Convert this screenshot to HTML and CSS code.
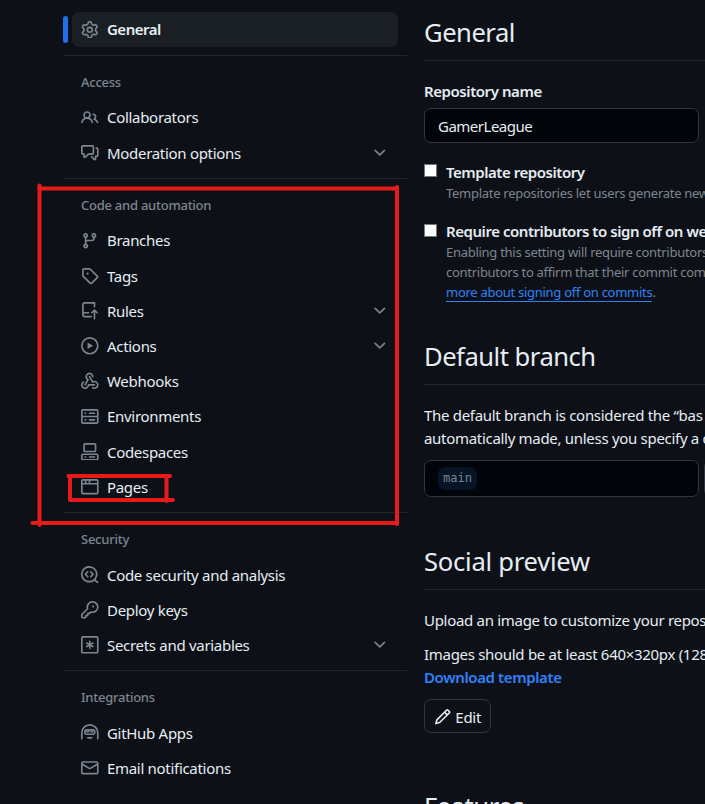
FILE: index.html
```html
<!DOCTYPE html>
<html lang="en">
<head>
<meta charset="utf-8">
<title>General settings</title>
<link rel="stylesheet" href="styles.css">
</head>
<body>
<svg class="defs" width="0" height="0">
  <symbol id="chev" viewBox="0 0 16 16"><path d="M12.78 5.22a.749.749 0 0 1 0 1.06l-4.25 4.25a.749.749 0 0 1-1.06 0L3.22 6.28a.749.749 0 1 1 1.06-1.06L8 8.939l3.72-3.719a.749.749 0 0 1 1.06 0Z"/></symbol>
</svg>
<div class="page">
  <nav class="sidebar">
    <a class="item active"><svg class="icon" viewBox="0 0 16 16"><path d="M8 0a8.2 8.2 0 0 1 .701.031C9.444.095 9.99.645 10.16 1.29l.288 1.107c.018.066.079.158.212.224.231.114.454.243.668.386.123.082.233.09.299.071l1.103-.303c.644-.176 1.392.021 1.82.63.27.385.506.792.704 1.218.315.675.111 1.422-.364 1.891l-.814.806c-.049.048-.098.147-.088.294.016.257.016.515 0 .772-.01.147.038.246.088.294l.814.806c.475.469.679 1.216.364 1.891a7.977 7.977 0 0 1-.704 1.217c-.428.61-1.176.807-1.82.63l-1.102-.302c-.067-.019-.177-.011-.3.071a5.909 5.909 0 0 1-.668.386c-.133.066-.194.158-.211.224l-.29 1.106c-.168.646-.715 1.196-1.458 1.26a8.006 8.006 0 0 1-1.402 0c-.743-.064-1.289-.614-1.458-1.26l-.289-1.106c-.018-.066-.079-.158-.212-.224a5.738 5.738 0 0 1-.668-.386c-.123-.082-.233-.09-.299-.071l-1.103.303c-.644.176-1.392-.021-1.82-.63a8.12 8.12 0 0 1-.704-1.218c-.315-.675-.111-1.422.363-1.891l.815-.806c.05-.048.098-.147.088-.294a6.214 6.214 0 0 1 0-.772c.01-.147-.038-.246-.088-.294l-.815-.806C.635 6.045.431 5.298.746 4.623a7.92 7.92 0 0 1 .704-1.217c.428-.61 1.176-.807 1.82-.63l1.102.302c.067.019.177.011.3-.071.214-.143.437-.272.668-.386.133-.066.194-.158.211-.224l.29-1.106C6.009.645 6.556.095 7.299.03 7.53.01 7.764 0 8 0Zm-.571 1.525c-.036.003-.108.036-.137.146l-.289 1.105c-.147.561-.549.967-.998 1.189-.173.086-.34.183-.5.29-.417.278-.97.423-1.529.27l-1.103-.303c-.109-.03-.175.016-.195.045-.22.312-.412.644-.573.99-.014.031-.021.11.059.19l.815.806c.411.406.562.957.53 1.456a4.709 4.709 0 0 0 0 .582c.032.499-.119 1.05-.53 1.456l-.815.806c-.081.08-.073.159-.059.19.162.346.353.677.573.989.02.03.085.076.195.046l1.102-.303c.56-.153 1.113-.008 1.53.27.161.107.328.204.501.29.447.222.85.629.997 1.189l.289 1.105c.029.109.101.143.137.146a6.6 6.6 0 0 0 1.142 0c.036-.003.108-.036.137-.146l.289-1.105c.147-.561.549-.967.998-1.189.173-.086.34-.183.5-.29.417-.278.97-.423 1.529-.27l1.103.303c.109.029.175-.016.195-.045.22-.313.411-.644.573-.99.014-.031.021-.11-.059-.19l-.815-.806c-.411-.406-.562-.957-.53-1.456a4.709 4.709 0 0 0 0-.582c-.032-.499.119-1.05.53-1.456l.815-.806c.081-.08.073-.159.059-.19a6.464 6.464 0 0 0-.573-.989c-.02-.03-.085-.076-.195-.046l-1.102.303c-.56.153-1.113.008-1.53-.27a4.44 4.44 0 0 0-.501-.29c-.447-.222-.85-.629-.997-1.189l-.289-1.105c-.029-.11-.101-.143-.137-.146a6.6 6.6 0 0 0-1.142 0ZM11 8a3 3 0 1 1-6 0 3 3 0 0 1 6 0ZM9.5 8a1.5 1.5 0 1 0-3.001.001A1.5 1.5 0 0 0 9.5 8Z"/></svg><span>General</span></a>

    <section class="group">
      <h3>Access</h3>
      <a class="item"><svg class="icon" viewBox="0 0 16 16"><path d="M2 5.5a3.5 3.5 0 1 1 5.898 2.549 5.508 5.508 0 0 1 3.034 4.084.75.75 0 1 1-1.482.235 4 4 0 0 0-7.9 0 .75.75 0 0 1-1.482-.236A5.507 5.507 0 0 1 3.102 8.05 3.493 3.493 0 0 1 2 5.5ZM11 4a3.001 3.001 0 0 1 2.22 5.018 5.01 5.01 0 0 1 2.56 3.012.749.749 0 0 1-.885.954.752.752 0 0 1-.549-.514 3.507 3.507 0 0 0-2.522-2.372.75.75 0 0 1-.574-.73v-.352a.75.75 0 0 1 .416-.672A1.5 1.5 0 0 0 11 5.5.75.75 0 0 1 11 4Zm-5.5-.5a2 2 0 1 0-.001 3.999A2 2 0 0 0 5.5 3.5Z"/></svg><span>Collaborators</span></a>
      <a class="item"><svg class="icon" viewBox="0 0 16 16"><path d="M1.75 1h8.5c.966 0 1.75.784 1.75 1.75v5.5A1.75 1.75 0 0 1 10.25 10H7.061l-2.574 2.573A1.458 1.458 0 0 1 2 11.543V10h-.25A1.75 1.75 0 0 1 0 8.25v-5.5C0 1.784.784 1 1.75 1ZM1.5 2.75v5.5c0 .138.112.25.25.25h1a.75.75 0 0 1 .75.75v2.19l2.72-2.72a.749.749 0 0 1 .53-.22h3.5a.25.25 0 0 0 .25-.25v-5.5a.25.25 0 0 0-.25-.25h-8.5a.25.25 0 0 0-.25.25Zm13 2a.25.25 0 0 0-.25-.25h-.5a.75.75 0 0 1 0-1.5h.5c.966 0 1.75.784 1.75 1.75v5.5A1.75 1.75 0 0 1 14.25 12H14v1.543a1.458 1.458 0 0 1-2.487 1.03L9.22 12.28a.749.749 0 0 1 1.06-1.06l2.22 2.22v-2.19a.75.75 0 0 1 .75-.75h1a.25.25 0 0 0 .25-.25Z"/></svg><span>Moderation options</span><svg class="chevron"><use href="#chev"/></svg></a>
    </section>

    <section class="group">
      <h3>Code and automation</h3>
      <a class="item"><svg class="icon" viewBox="0 0 16 16"><path d="M9.5 3.25a2.25 2.25 0 1 1 3 2.122V6A2.5 2.5 0 0 1 10 8.5H6a1 1 0 0 0-1 1v1.128a2.251 2.251 0 1 1-1.5 0V5.372a2.25 2.25 0 1 1 1.5 0v1.836A2.493 2.493 0 0 1 6 7h4a1 1 0 0 0 1-1v-.628A2.25 2.25 0 0 1 9.5 3.25Zm-6 0a.75.75 0 1 0 1.5 0 .75.75 0 0 0-1.5 0Zm8.25-.75a.75.75 0 1 0 0 1.5.75.75 0 0 0 0-1.5ZM4.25 12a.75.75 0 1 0 0 1.5.75.75 0 0 0 0-1.5Z"/></svg><span>Branches</span></a>
      <a class="item"><svg class="icon" viewBox="0 0 16 16"><path d="M1 7.775V2.75C1 1.784 1.784 1 2.75 1h5.025c.464 0 .91.184 1.238.513l6.25 6.25a1.75 1.75 0 0 1 0 2.474l-5.026 5.026a1.75 1.75 0 0 1-2.474 0l-6.25-6.25A1.752 1.752 0 0 1 1 7.775Zm1.5 0c0 .066.026.13.073.177l6.25 6.25a.25.25 0 0 0 .354 0l5.025-5.025a.25.25 0 0 0 0-.354l-6.25-6.25a.25.25 0 0 0-.177-.073H2.75a.25.25 0 0 0-.25.25ZM6 5a1 1 0 1 1 0 2 1 1 0 0 1 0-2Z"/></svg><span>Tags</span></a>
      <a class="item"><svg class="icon" viewBox="0 0 16 16"><path d="M1 2.5A2.5 2.5 0 0 1 3.5 0h8.75a.75.75 0 0 1 .75.75v3.5a.75.75 0 0 1-1.5 0V1.5h-8a1 1 0 0 0-1 1v6.708A2.493 2.493 0 0 1 3.5 9h3.25a.75.75 0 0 1 0 1.5H3.5a1 1 0 0 0 0 2h5.75a.75.75 0 0 1 0 1.5H3.5A2.5 2.5 0 0 1 1 11.5Zm13.23 7.79-1.24-1.208v6.169a.75.75 0 0 1-1.5 0V9.082l-1.213 1.228a.75.75 0 0 1-1.06-1.06l2.505-2.505a.75.75 0 0 1 1.06 0L15.29 9.23a.75.75 0 0 1-1.06 1.06Z"/></svg><span>Rules</span><svg class="chevron"><use href="#chev"/></svg></a>
      <a class="item"><svg class="icon" viewBox="0 0 16 16"><path d="M8 0a8 8 0 1 1 0 16A8 8 0 0 1 8 0ZM1.5 8a6.5 6.5 0 1 0 13 0 6.5 6.5 0 0 0-13 0Zm4.879-2.773 4.264 2.559a.25.25 0 0 1 0 .428l-4.264 2.559A.25.25 0 0 1 6 10.559V5.442a.25.25 0 0 1 .379-.215Z"/></svg><span>Actions</span><svg class="chevron"><use href="#chev"/></svg></a>
      <a class="item"><svg class="icon" viewBox="0 0 16 16"><path d="M5.5 4.25a2.25 2.25 0 0 1 4.5 0 .75.75 0 0 0 1.5 0 3.75 3.75 0 1 0-6.14 2.889l-2.272 4.258a.75.75 0 0 0 1.324.706L7 7.25a.75.75 0 0 0-.309-1.015A2.25 2.25 0 0 1 5.5 4.25Z"/><path d="M7.364 3.607a.75.75 0 0 1 1.03.257l2.608 4.349a3.75 3.75 0 1 1-.628 6.785.75.75 0 0 1 .752-1.299 2.25 2.25 0 1 0-.033-3.88.75.75 0 0 1-1.03-.256L7.107 4.636a.75.75 0 0 1 .257-1.03Z"/><path d="M2.9 8.776A.75.75 0 0 1 2.625 9.8 2.25 2.25 0 1 0 6 11.75a.75.75 0 0 1 .75-.751h5.5a.75.75 0 0 1 0 1.5H7.425a3.751 3.751 0 1 1-5.55-3.998.75.75 0 0 1 1.024.274Z"/></svg><span>Webhooks</span></a>
      <a class="item"><svg class="icon" viewBox="0 0 16 16"><path d="M1.75 1h12.5c.966 0 1.75.784 1.75 1.75v4c0 .372-.116.717-.314 1 .198.283.314.628.314 1v4a1.75 1.75 0 0 1-1.75 1.75H1.75A1.75 1.75 0 0 1 0 12.75v-4c0-.358.109-.707.314-1a1.739 1.739 0 0 1-.314-1v-4C0 1.784.784 1 1.75 1ZM1.5 2.75v4c0 .138.112.25.25.25h12.5a.25.25 0 0 0 .25-.25v-4a.25.25 0 0 0-.25-.25H1.75a.25.25 0 0 0-.25.25Zm.25 5.75a.25.25 0 0 0-.25.25v4c0 .138.112.25.25.25h12.5a.25.25 0 0 0 .25-.25v-4a.25.25 0 0 0-.25-.25ZM7 4.75A.75.75 0 0 1 7.75 4h4.5a.75.75 0 0 1 0 1.5h-4.5A.75.75 0 0 1 7 4.75ZM7.75 10h4.5a.75.75 0 0 1 0 1.5h-4.5a.75.75 0 0 1 0-1.5ZM3 4.75A.75.75 0 0 1 3.75 4h.5a.75.75 0 0 1 0 1.5h-.5A.75.75 0 0 1 3 4.75ZM3.75 10h.5a.75.75 0 0 1 0 1.5h-.5a.75.75 0 0 1 0-1.5Z"/></svg><span>Environments</span></a>
      <a class="item"><svg class="icon" viewBox="0 0 16 16"><path d="M0 11.25c0-.966.784-1.75 1.75-1.75h12.5c.966 0 1.75.784 1.75 1.75v3A1.75 1.75 0 0 1 14.25 16H1.75A1.75 1.75 0 0 1 0 14.25Zm2-9.5C2 .784 2.784 0 3.75 0h8.5C13.216 0 14 .784 14 1.75v5a1.75 1.75 0 0 1-1.75 1.75h-8.5A1.75 1.75 0 0 1 2 6.75Zm1.75-.25a.25.25 0 0 0-.25.25v5c0 .138.112.25.25.25h8.5a.25.25 0 0 0 .25-.25v-5a.25.25 0 0 0-.25-.25Zm-2 9.5a.25.25 0 0 0-.25.25v3c0 .138.112.25.25.25h12.5a.25.25 0 0 0 .25-.25v-3a.25.25 0 0 0-.25-.25ZM7 12.75a.75.75 0 0 1 .75-.75h4.5a.75.75 0 0 1 0 1.5h-4.5a.75.75 0 0 1-.75-.75Zm-4 0a.75.75 0 0 1 .75-.75h.5a.75.75 0 0 1 0 1.5h-.5a.75.75 0 0 1-.75-.75Z"/></svg><span>Codespaces</span></a>
      <a class="item"><svg class="icon" viewBox="0 0 16 16"><path d="M0 2.75C0 1.784.784 1 1.75 1h12.5c.966 0 1.75.784 1.75 1.75v10.5A1.75 1.75 0 0 1 14.25 15H1.75A1.75 1.75 0 0 1 0 13.25ZM14.5 6h-13v7.25c0 .138.112.25.25.25h12.5a.25.25 0 0 0 .25-.25Zm-6-3.5v2h6V2.75a.25.25 0 0 0-.25-.25ZM5 2.5v2h2v-2Zm-3.25 0a.25.25 0 0 0-.25.25V4.5h2v-2Z"/></svg><span>Pages</span></a>
    </section>

    <section class="group">
      <h3>Security</h3>
      <a class="item"><svg class="icon" viewBox="0 0 16 16"><path d="M8.28 4.72a.749.749 0 0 1 1.06 0l2.25 2.25a.749.749 0 0 1 0 1.06l-2.25 2.25a.749.749 0 0 1-1.06-1.06L10 7.5 8.28 5.78a.749.749 0 0 1 0-1.06ZM6.72 4.72a.749.749 0 0 0-1.06 0L3.41 6.97a.749.749 0 0 0 0 1.06l2.25 2.25a.749.749 0 0 0 1.06-1.06L5 7.5l1.72-1.72a.749.749 0 0 0 0-1.06Z"/><path d="M0 7.5a7.5 7.5 0 1 1 13.307 4.747l2.473 2.473a.749.749 0 1 1-1.06 1.06l-2.473-2.473A7.5 7.5 0 0 1 0 7.5Zm1.5 0a6 6 0 1 0 12 0 6 6 0 0 0-12 0Z"/></svg><span>Code security and analysis</span></a>
      <a class="item"><svg class="icon" viewBox="0 0 16 16"><path d="M10.5 0a5.499 5.499 0 1 1-1.288 10.848l-.932.932a.749.749 0 0 1-.53.22H7v.75a.749.749 0 0 1-.22.53l-.5.5a.749.749 0 0 1-.53.22H5v.75a.749.749 0 0 1-.22.53l-.5.5a.749.749 0 0 1-.53.22h-2A1.75 1.75 0 0 1 0 14.25v-2c0-.199.079-.389.22-.53l4.932-4.932A5.5 5.5 0 0 1 10.5 0Zm-4 5.5c-.001.431.069.86.205 1.269a.75.75 0 0 1-.181.768L1.5 12.56v1.69c0 .138.112.25.25.25h1.69l.06-.06v-1.19a.75.75 0 0 1 .75-.75h1.19l.06-.06v-1.19a.75.75 0 0 1 .75-.75h1.19l1.023-1.025a.75.75 0 0 1 .768-.18A4 4 0 1 0 6.5 5.5ZM11 6a1 1 0 1 1 0-2 1 1 0 0 1 0 2Z"/></svg><span>Deploy keys</span></a>
      <a class="item"><svg class="icon" viewBox="0 0 16 16"><path d="M1.75 0h12.5C15.216 0 16 .784 16 1.75v12.5A1.75 1.75 0 0 1 14.25 16H1.75A1.75 1.75 0 0 1 0 14.25V1.75C0 .784.784 0 1.75 0Zm0 1.5a.25.25 0 0 0-.25.25v12.5c0 .138.112.25.25.25h12.5a.25.25 0 0 0 .25-.25V1.75a.25.25 0 0 0-.25-.25Z"/><path class="line" d="M8 4.75v6.5M5.2 6.4l5.6 3.2M5.2 9.6l5.6-3.2"/></svg><span>Secrets and variables</span><svg class="chevron"><use href="#chev"/></svg></a>
    </section>

    <section class="group">
      <h3>Integrations</h3>
      <a class="item"><svg class="icon" viewBox="0 0 16 16"><path class="line" d="M.75 13.5V8a7.25 7.25 0 0 1 14.5 0v5.5M6.2 12.6h3.6M5.4 5.4h5.2a1.9 1.9 0 0 1 0 3.9H5.4a1.9 1.9 0 0 1 0-3.9Z"/><path class="line thin" d="m5.2 6.6 1 1 1-1M8.8 6.6l1 1 1-1"/></svg><span>GitHub Apps</span></a>
      <a class="item"><svg class="icon" viewBox="0 0 16 16"><path d="M1.75 2h12.5c.966 0 1.75.784 1.75 1.75v8.5A1.75 1.75 0 0 1 14.25 14H1.75A1.75 1.75 0 0 1 0 12.25v-8.5C0 2.784.784 2 1.75 2ZM1.5 12.251c0 .138.112.25.25.25h12.5a.25.25 0 0 0 .25-.25V5.809L8.38 9.397a.75.75 0 0 1-.76 0L1.5 5.809v6.442Zm13-8.181v-.32a.25.25 0 0 0-.25-.25H1.75a.25.25 0 0 0-.25.25v.32L8 7.88Z"/></svg><span>Email notifications</span></a>
    </section>
  </nav>

  <main class="content">
    <h2>General</h2>
    <label class="field-label">Repository name</label>
    <div class="input">GamerLeague</div>

    <div class="check first">
      <i class="box"></i>
      <div><strong>Template repository</strong>
      <p>Template repositories let users generate new</p></div>
    </div>
    <div class="check second">
      <i class="box"></i>
      <div><strong>Require contributors to sign off on we</strong>
      <p>Enabling this setting will require contributors<br>contributors to affirm that their commit com<br><a class="underlined">more about signing off on commits</a>.</p></div>
    </div>

    <h2 class="branch-title">Default branch</h2>
    <p class="body branch-text">The default branch is considered the “bas<br>automatically made, unless you specify a d</p>
    <div class="branch-row">
      <div class="input"><code>main</code></div>
      <div class="side-button"></div>
    </div>

    <h2 class="social-title">Social preview</h2>
    <p class="body upload">Upload an image to customize your repos</p>
    <p class="body sizes">Images should be at least 640×320px (128<br><a class="download">Download template</a></p>
    <button class="edit"><svg viewBox="0 0 16 16"><path d="M11.013 1.427a1.75 1.75 0 0 1 2.474 0l1.086 1.086a1.75 1.75 0 0 1 0 2.474l-8.61 8.61c-.21.21-.47.364-.756.445l-3.251.93a.75.75 0 0 1-.927-.928l.929-3.25c.081-.286.235-.547.445-.758l8.61-8.61Zm.176 4.823L9.75 4.81l-6.286 6.287a.253.253 0 0 0-.064.108l-.558 1.953 1.953-.558a.253.253 0 0 0 .108-.064Zm1.238-3.763a.25.25 0 0 0-.354 0L10.811 3.75l1.439 1.44 1.263-1.263a.25.25 0 0 0 0-.354Z"/></svg><span>Edit</span></button>
    <h2 class="features-title">Features</h2>
  </main>
</div>
<svg class="marks" viewBox="0 0 705 804">
  <path d="M39 188.5H397M39.5 185.5V525M32.5 523H397M397 187V524"/>
  <path d="M68.5 476H170M70 476V499.5M70 500H173M166.5 476V501"/>
</svg>
</body>
</html>
```
FILE: styles.css
```css
* { box-sizing: border-box; }
html { overflow: hidden; }
body {
  margin: 0;
  width: 705px;
  height: 804px;
  overflow: hidden;
  background: #0d1117;
  color: #e6edf3;
  font: 15px/23px "Noto Sans", "Open Sans", sans-serif;
  letter-spacing: -0.3px;
}
h2, h3, p { margin: 0; font-weight: 400; }
.defs { position: absolute; }
.page { display: flex; gap: 17px; height: 804px; padding-left: 63px; }

.sidebar { flex: 0 0 344px; padding-top: 12px; }
.item {
  display: flex;
  align-items: center;
  height: 35.2px;
  margin: 0 9px;
  padding: 0 9px;
  border-radius: 7px;
}
.item span { padding-top: 0.8px; }
.icon { flex: none; width: 17.6px; height: 17.6px; margin-right: 8.4px; fill: #7d8590; }
.icon .line { fill: none; stroke: #7d8590; stroke-width: 1.5; stroke-linecap: round; stroke-linejoin: round; }
.icon .thin { stroke-width: 1.1; }
.chevron { width: 17.6px; height: 17.6px; margin-left: auto; fill: #7d8590; }
.active { position: relative; background: #1a1f23; font-weight: 600; letter-spacing: -0.5px; }
.active::before {
  content: "";
  position: absolute;
  left: -9px;
  top: 4px;
  width: 5px;
  height: 27px;
  border-radius: 3px;
  background: #1f6feb;
}
.group { margin-top: 7.7px; padding-top: 8.8px; border-top: 1px solid #21262d; }
.group h3 {
  height: 35.2px;
  padding-left: 18px;
  color: #7d8590;
  font-size: 13px;
  font-weight: 500;
  line-height: 34.6px;
  letter-spacing: -0.25px;
}

.content { flex: 1 1 0; min-width: 0; padding-top: 12px; overflow: hidden; white-space: nowrap; }
h2 {
  height: 49px;
  border-bottom: 1px solid #21262d;
  font-size: 25.6px;
  line-height: 42px;
  letter-spacing: -0.5px;
}
.field-label { display: block; margin-top: 19px; font-weight: 600; line-height: 22px; letter-spacing: -0.43px; }
.input {
  display: flex;
  align-items: center;
  width: 275px;
  height: 35px;
  margin-top: 6px;
  padding: 2px 13px 0;
  border: 1px solid #30363d;
  border-radius: 7px;
  background: #010409;
  letter-spacing: -0.5px;
}
.check { display: flex; }
.check strong { display: block; font-weight: 600; line-height: 23px; letter-spacing: -0.45px; }
.check p { margin-top: -1px; color: #7d8590; font-size: 13px; line-height: 20px; letter-spacing: -0.28px; }
.first { margin-top: 18px; }
.second { margin-top: 17px; }
.box { flex: none; width: 13px; height: 13px; margin: 3px 9px 0 0; border: 1px solid #767676; background: #fff; }
.second .box { margin-top: 4px; }
.underlined { border-bottom: 1px solid #2f81f7; color: #2f81f7; }
.branch-title { margin-top: 34px; }
.branch-text { margin-top: 19px; }
.branch-row { display: flex; gap: 5px; margin-top: 10px; }
.branch-row .input { flex: none; height: 37px; margin: 0; padding-top: 0; }
.side-button { flex: none; width: 60px; height: 37px; border: 1px solid #30363d; border-radius: 7px; }
code {
  padding: 0 5px;
  border-radius: 7px;
  background: #051426;
  color: #7d8590;
  font: 12px/23px "DejaVu Sans Mono", monospace;
  letter-spacing: 0;
}
.social-title { margin-top: 44px; letter-spacing: -0.25px; }
.upload { margin-top: 19px; }
.sizes { margin-top: 11px; }
.download { color: #2f81f7; font-weight: 600; letter-spacing: -0.38px; }
.edit {
  display: flex;
  align-items: center;
  width: 67px;
  height: 34px;
  margin-top: 10px;
  padding: 2px 9px 0;
  border: 1px solid #30363d;
  border-radius: 7px;
  background: transparent;
  color: #e6edf3;
  font: inherit;
  letter-spacing: inherit;
}
.edit svg { width: 17.6px; height: 17.6px; margin-right: 4px; fill: #e6edf3; }
.features-title { margin-top: 53px; }

.marks { position: absolute; left: 0; top: 0; width: 705px; height: 804px; }
.marks path { fill: none; stroke: #e81b1b; stroke-width: 4; stroke-linecap: round; stroke-linejoin: round; }
```
